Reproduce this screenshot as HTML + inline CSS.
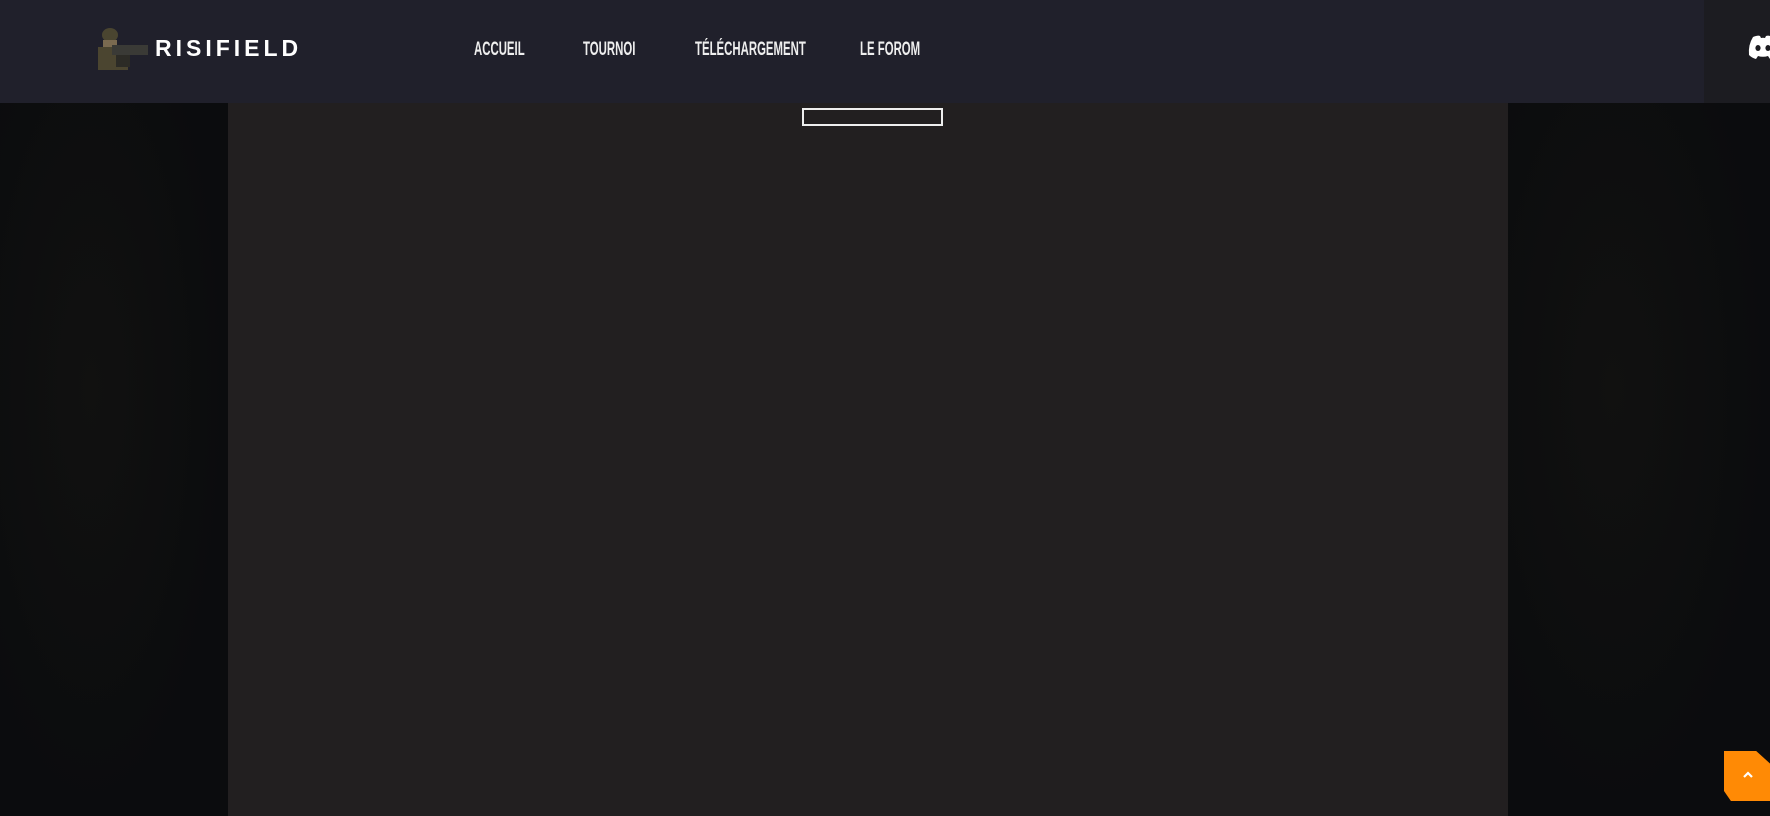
<!DOCTYPE html>
<html><head><meta charset="utf-8"><style>
*{margin:0;padding:0;box-sizing:border-box}
body{width:1770px;height:816px;overflow:hidden;background:#0b0c0e;font-family:"Liberation Sans",sans-serif;position:relative}
.side{position:absolute;top:103px;bottom:0;width:228px;background:radial-gradient(ellipse at 40% 40%,#111110 0%,#0b0c0e 70%)}
.header{position:absolute;left:0;top:0;width:1770px;height:103px;background:#20202b}
.hr{position:absolute;left:1704px;top:0;width:66px;height:103px;background:#1c1c21}
.col{position:absolute;left:228px;top:103px;width:1280px;height:713px;background:#221f20}
.box{position:absolute;left:802px;top:108px;width:141px;height:18px;border:2px solid #eee}
.logo{position:absolute;left:155px;top:35px;color:#fff;font-weight:bold;font-size:23px;letter-spacing:4px}
.nav{position:absolute;top:39px;color:#eee;font-weight:bold;font-size:19px;transform:scaleX(.6);transform-origin:left;white-space:nowrap}
.top{position:absolute;left:1724px;top:751px;width:46px;height:50px;background:#ff8a05;clip-path:polygon(0 0,70% 0,100% 25%,100% 100%,15% 100%,0 80%)}
</style></head><body>
<div class="side" style="left:0"></div>
<div class="side" style="left:1508px;width:262px"></div>
<div class="col"></div>
<div class="box"></div>
<div class="header"></div>
<div class="hr"></div>
<svg style="position:absolute;left:98px;top:27px" width="54" height="43" viewBox="0 0 54 43">
<ellipse cx="12" cy="8" rx="8" ry="7" fill="#4a4530"/>
<rect x="5" y="13" width="14" height="10" fill="#7a6a50"/>
<rect x="0" y="20" width="30" height="23" fill="#4b4530"/>
<rect x="14" y="18" width="36" height="10" fill="#3a3a36"/>
<rect x="18" y="28" width="14" height="12" fill="#2c2b26"/>
</svg>
<div class="logo">RISIFIELD</div>
<div class="nav" style="left:474px">ACCUEIL</div>
<div class="nav" style="left:583px">TOURNOI</div>
<div class="nav" style="left:695px">TÉLÉCHARGEMENT</div>
<div class="nav" style="left:860px">LE FOROM</div>
<svg style="position:absolute;left:1747px;top:34px" width="32" height="26" viewBox="0 0 32 26">
<path d="M6 3 Q11 1 13 2 L14 4 Q16 3.5 18 4 L19 2 Q22 1 26 3 Q31 11 30 21 Q27 24 23 25 L21 22 Q16 23.5 11 22 L9 25 Q5 24 2 21 Q1 11 6 3Z" fill="#fff"/>
<ellipse cx="11" cy="14" rx="2.6" ry="3" fill="#1c1c21"/><ellipse cx="21" cy="14" rx="2.6" ry="3" fill="#1c1c21"/>
</svg>
<div class="top"></div>
<svg style="position:absolute;left:1742px;top:771px" width="12" height="8" viewBox="0 0 12 8"><path d="M2 6 L6 2 L10 6" stroke="#fff" stroke-width="2.2" fill="none"/></svg>
</body></html>
